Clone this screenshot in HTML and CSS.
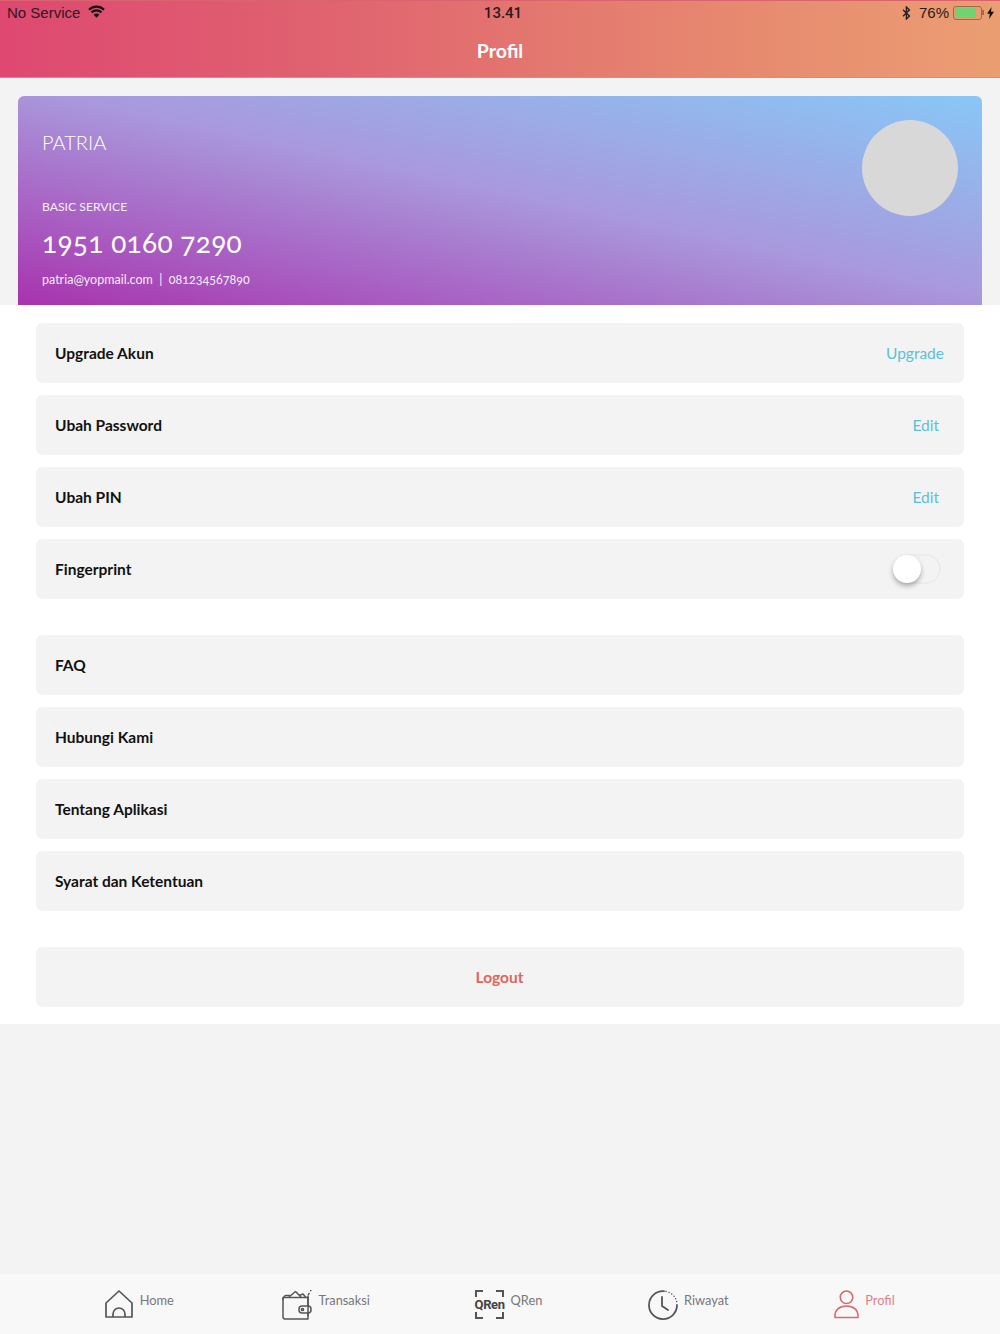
FILE: index.html
```html
<!DOCTYPE html>
<html lang="id">
<head>
<meta charset="utf-8">
<title>Profil</title>
<link rel="stylesheet" href="styles.css">
</head>
<body>
<div class="app">
  <header class="header">
    <div class="status">
      <div class="status-left">
        <span>No Service</span>
        <svg class="wifi" width="17" height="13" viewBox="0 0 17 13"><path d="M1 4.800a10.600 10.600 0 0 1 15 0" fill="none" stroke="#111" stroke-width="2.200"/><path d="M3.600 7.400a7 7 0 0 1 9.800 0" fill="none" stroke="#111" stroke-width="2.200"/><path d="M8.500 12.800 5.700 9.800a3.900 3.900 0 0 1 5.600 0z" fill="#111"/></svg>
      </div>
      <div class="status-time">13.41</div>
      <div class="status-right">
        <svg class="bt" width="9" height="14" viewBox="0 0 9 14"><path d="M1 3.800 7.400 10 4.400 13V1l3 3L1 10.200" fill="none" stroke="#222" stroke-width="1.400"/></svg>
        <span>76%</span>
        <span class="battery"><span class="battery-fill"></span></span>
        <span class="battery-cap"></span>
        <svg class="bolt" width="7" height="12" viewBox="0 0 7 12"><path d="M4.600 0 0 6.800h2.800L2 12l5-7.200H4z" fill="#111"/></svg>
      </div>
    </div>
    <h1 class="title">Profil</h1>
  </header>

  <section class="card">
    <div class="card-info">
      <div class="card-name">PATRIA</div>
      <div class="card-service">BASIC SERVICE</div>
      <div class="card-number">1951 0160 7290</div>
      <div class="card-contact">patria@yopmail.com &nbsp;|&nbsp; 081234567890</div>
    </div>
    <div class="avatar"></div>
  </section>

  <main class="sheet">
    <div class="group">
      <div class="row"><span class="row-label">Upgrade Akun</span><span class="row-action">Upgrade</span></div>
      <div class="row"><span class="row-label">Ubah Password</span><span class="row-action row-action-edit">Edit</span></div>
      <div class="row"><span class="row-label">Ubah PIN</span><span class="row-action row-action-edit">Edit</span></div>
      <div class="row"><span class="row-label">Fingerprint</span><span class="toggle"><span class="knob"></span></span></div>
    </div>
    <div class="group">
      <div class="row"><span class="row-label">FAQ</span></div>
      <div class="row"><span class="row-label">Hubungi Kami</span></div>
      <div class="row"><span class="row-label">Tentang Aplikasi</span></div>
      <div class="row"><span class="row-label">Syarat dan Ketentuan</span></div>
    </div>
    <div class="group">
      <div class="row row-logout">Logout</div>
    </div>
  </main>

  <nav class="tabs">
    <div class="tab tab-home">
      <svg width="28" height="28" viewBox="0 0 28 28" fill="none" stroke="#555" stroke-width="1.700" stroke-linejoin="round"><path d="M1 13 14 1l13 12v14H1z"/><path d="M8 27v-3a6 6 0 0 1 12 0v3"/></svg>
      <span>Home</span>
    </div>
    <div class="tab">
      <svg width="30" height="30" viewBox="0 0 30 30" fill="none" stroke="#555" stroke-width="1.500" stroke-linejoin="round"><path d="M1 7.500h25V29H3a2 2 0 0 1-2-2z"/><path d="M1 10c0-2 1-4.500 3-4.500h4"/><path d="M7 7 13.500 1.500 19 7"/><path d="M17 5.500 21 4l3 3.500"/><path d="M26 5.500V16M26 23v3"/><rect x="17" y="16" width="12" height="7" rx="3"/><circle cx="20.500" cy="19.500" r="1.100"/><path d="M26 5 27.500 3M28 .5 29.500 .5" stroke-width="1.300"/></svg>
      <span>Transaksi</span>
    </div>
    <div class="tab">
      <span class="qr-icon"><span class="qr-text">QRen</span></span>
      <span>QRen</span>
    </div>
    <div class="tab">
      <svg width="30" height="30" viewBox="0 0 30 30" fill="none" stroke="#555" stroke-width="1.800" stroke-linecap="round"><path d="M16 1.100A14 14 0 1 0 29 15"/><path d="M18 1.500 18.100 1.500M21 2.500 21.100 2.500M23.700 4 23.800 4M26 6.200 26.100 6.200M27.600 8.700 27.700 8.700M28.600 11.500 28.700 11.500" stroke-width="1.400"/><path d="M14 7v9l6 4"/></svg>
      <span>Riwayat</span>
    </div>
    <div class="tab tab-active">
      <svg width="25" height="29" viewBox="0 0 26 29" fill="none" stroke="#d9686b" stroke-width="1.600" stroke-linejoin="round"><circle cx="13" cy="7" r="6.500"/><path d="M1 28v-1.500C1 20 6 16 13 16s12 4 12 10.500V28z"/></svg>
      <span>Profil</span>
    </div>
  </nav>
</div>
</body>
</html>
```

FILE: styles.css
```css
* { box-sizing: border-box; }
html, body { margin: 0; padding: 0; }
body { font-family: "Lato", "Liberation Sans", sans-serif; background: #f3f3f3; }
.app { width: 1000px; height: 1334px; display: flex; flex-direction: column; background: #f3f3f3; overflow: hidden; }

.header { height: 78px; background: linear-gradient(to right, #de4871, #e0636f 33%, #e6866f 70%, #eb9e72); border-bottom: 1px solid #d88; border-top: 1px solid #d9636f; }
.status { display: grid; grid-template-columns: 1fr auto 1fr; align-items: center; height: 23px; padding: 0 6px 0 7px; font-family: "Liberation Sans", sans-serif; font-size: 15px; color: #2a1a20; }
.status-left { display: flex; align-items: center; gap: 8px; }
.wifi { margin-top: -2px; }
.status-time { font-family: "Roboto", sans-serif; font-weight: 500; padding-left: 5px; font-size: 15px; }
.status-right { display: flex; align-items: center; justify-content: flex-end; }
.bt { margin-right: 8px; }
.battery { width: 29px; height: 14px; border: 1px solid #a8644f; border-radius: 3px; padding: 1px; margin-left: 4px; display: block; }
.battery-fill { display: block; width: 21px; height: 10px; background: #6fd46f; border-radius: 1px; }
.battery-cap { width: 2px; height: 5px; background: #a8644f; margin-right: 3px; }
.bolt { display: block; }
.title { margin: 14px 0 0; text-align: center; font-size: 19.500px; line-height: 26px; font-weight: 700; color: #fff; }

.card { margin: 18px 18px 0; height: 209px; border-radius: 6px 6px 0 0; padding: 24px 24px 0; display: flex; justify-content: space-between; align-items: flex-start; color: #fff; background: linear-gradient(to top right, #a833ae, #a998dc 52%, #88c7f7); }
.card-info { display: flex; flex-direction: column; }
.card-name { font-size: 20px; line-height: 44px; font-weight: 300; }
.card-service { font-size: 12.200px; line-height: 16px; margin-top: 35px; opacity: .9; }
.card-number { font-size: 28px; line-height: 34px; margin-top: 10px; letter-spacing: .3px; font-variant-numeric: oldstyle-nums; }
.card-contact { font-size: 12.500px; line-height: 18px; margin-top: 12px; opacity: .9; font-variant-numeric: oldstyle-nums; }
.avatar { width: 96px; height: 96px; border-radius: 50%; background: #d8d8d8; }

.sheet { background: #fff; padding: 18px 36px 17px; display: flex; flex-direction: column; gap: 36px; }
.group { display: flex; flex-direction: column; gap: 12px; }
.row { height: 60px; border-radius: 6px; background: #f3f3f3; display: flex; align-items: center; justify-content: space-between; padding: 0 20px 0 19px; }
.row-label { font-size: 15.500px; font-weight: 700; color: #111; line-height: 19px; }
.row-action { font-size: 15.500px; color: #5bbfdc; }
.row-action-edit { margin-right: 5px; }
.row-logout { justify-content: center; font-size: 15.500px; font-weight: 700; color: #e0655a; }
.toggle { width: 48px; height: 30px; border: 2px solid #ececec; border-radius: 15px; margin-right: 3px; position: relative; display: block; }
.knob { position: absolute; left: -2px; top: -1px; width: 28px; height: 28px; border-radius: 50%; background: #fff; box-shadow: 0 3px 5px rgba(0,0,0,.3); }

.tabs { margin-top: auto; height: 60px; background: #f8f8f8; display: flex; justify-content: space-evenly; align-items: flex-start; padding-top: 16px; }
.tab { display: flex; align-items: flex-start; gap: 6.500px; font-size: 12.800px; line-height: 20px; color: #777; }
.tab-home { margin-right: 3px; }
.tab-active { color: #e07f82; }
.qr-icon { width: 29px; height: 29px; display: flex; align-items: center; justify-content: center; background:
  linear-gradient(#555,#555) 0 0/8px 2px no-repeat, linear-gradient(#555,#555) 0 0/2px 7px no-repeat,
  linear-gradient(#555,#555) 100% 0/8px 2px no-repeat, linear-gradient(#555,#555) 100% 0/2px 7px no-repeat,
  linear-gradient(#555,#555) 0 100%/8px 2px no-repeat, linear-gradient(#555,#555) 0 100%/2px 7px no-repeat,
  linear-gradient(#555,#555) 100% 100%/8px 2px no-repeat, linear-gradient(#555,#555) 100% 100%/2px 7px no-repeat; }
.qr-text { font-family: "Roboto", sans-serif; font-size: 13px; font-weight: 700; color: #444; letter-spacing: -.4px; }
```
